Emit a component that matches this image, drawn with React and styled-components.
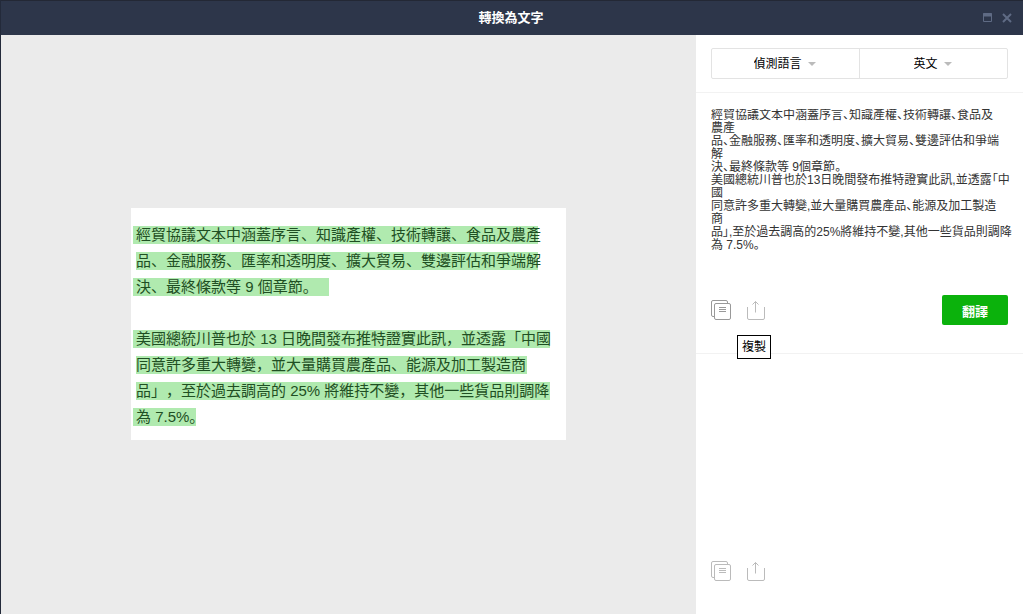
import React from 'react';
import styled, { createGlobalStyle } from 'styled-components';

const GlobalStyle = createGlobalStyle`
  * {
    box-sizing: border-box;
  }

  body {
    margin: 0;
    background: #fff;
    font-family: "Liberation Sans", "Noto Sans CJK JP", sans-serif;
    font-size: 12px;
    color: #000;
  }

  button, select, textarea {
    font: inherit;
    color: inherit;
  }
`;

const Window = styled.div`
  display: flex;
  flex-direction: column;
  min-height: 100vh;
  border-left: 1px solid #232a3a;
`;

const TitleBar = styled.header`
  display: grid;
  grid-template-columns: 1fr auto 1fr;
  align-items: center;
  height: 35px;
  padding: 0 11px 0 9px;
  background: #2d364a;
  border-top: 1px solid #232835;
`;

const Title = styled.h1`
  grid-column: 2;
  margin: 0;
  font-size: 13px;
  line-height: 20px;
  color: #fff;
`;

const WindowButtons = styled.div`
  display: flex;
  justify-content: flex-end;
  gap: 9px;
`;

const IconButton = styled.button`
  display: flex;
  padding: 0;
  border: 0;
  background: none;
  color: ${props => props.$color};
  cursor: pointer;
`;

const Body = styled.div`
  flex: 1;
  display: flex;
`;

const ImageArea = styled.main`
  flex: 1;
  display: flex;
  align-items: center;
  justify-content: center;
  padding-bottom: 2px;
  background: #ebebeb;
`;

const Scan = styled.div`
  width: 435px;
  padding: 14px 2px 10px;
  background: #fff;
  color: #1f4f23;
  font-size: 15px;
  text-spacing-trim: space-all;
`;

const ScanLine = styled.div`
  display: flex;
  align-items: center;
  height: 26px;
  padding-left: ${props => (props.$indent ? 3 : 0)}px;
`;

const Highlight = styled.span`
  height: 18px;
  padding-left: ${props => (props.$indent ? 0 : 3)}px;
  background: #b0eaaf;
  line-height: 18px;
  white-space: nowrap;
`;

const Panel = styled.aside`
  display: flex;
  flex-direction: column;
  width: 327px;
  background: #fff;
`;

const LanguageBar = styled.div`
  padding: 13px 15px;
  border-bottom: 1px solid #f2f2f2;
`;

const LanguageGroup = styled.div`
  display: flex;
  border: 1px solid #e3e3e3;
  border-radius: 2px;
`;

const LanguageField = styled.label`
  flex: 1;
  display: flex;
  align-items: center;
  justify-content: center;
  gap: 5px;
  height: 29px;
  padding-right: 2px;

  &:first-child {
    border-right: 1px solid #e3e3e3;
  }
`;

const LanguageSelect = styled.select`
  appearance: none;
  padding: 0;
  border: 0;
  outline: 0;
  background: none;
  cursor: pointer;
`;

const Source = styled.section`
  display: flex;
  flex-direction: column;
  gap: 4px;
  padding: 16px 15px 28px;
  border-bottom: 1px solid #f2f2f2;
`;

const TextBox = styled.textarea`
  flex: ${props => (props.$fill ? 1 : 'none')};
  width: calc(100% + 10px);
  padding: 0;
  border: 0;
  outline: 0;
  resize: none;
  overflow: hidden;
  background: none;
  color: #333;
  line-height: 13px;
  white-space: pre;
  font-feature-settings: "palt";
`;

const Result = styled.section`
  flex: 1;
  display: flex;
  flex-direction: column;
  padding: 16px 15px 33px;
`;

const Actions = styled.div`
  display: flex;
  align-items: center;
  gap: 16px;
`;

const CopyWrap = styled.div`
  position: relative;
`;

const Tooltip = styled.span`
  position: absolute;
  top: 35px;
  left: 26px;
  padding: 1px 4px;
  border: 1px solid #000;
  background: #fff;
  line-height: 20px;
  white-space: nowrap;
`;

const TranslateButton = styled.button`
  width: 66px;
  height: 30px;
  margin-left: auto;
  padding: 0;
  border: 0;
  border-radius: 2px;
  background: #0bb20c;
  color: #fff;
  font-size: 13px;
  font-weight: bold;
  cursor: pointer;
`;

const scanLines = [
  { text: '經貿協議文本中涵蓋序言、知識產權、技術轉讓、食品及農產', width: 405 },
  { text: '品、金融服務、匯率和透明度、擴大貿易、雙邊評估和爭端解', width: 402, indent: true },
  { text: '決、最終條款等 9 個章節。', width: 196 },
  { text: '' },
  { text: '美國總統川普也於 13 日晚間發布推特證實此訊，並透露「中國', width: 417 },
  { text: '同意許多重大轉變，並大量購買農產品、能源及加工製造商', width: 391, indent: true },
  { text: '品」，至於過去調高的 25% 將維持不變，其他一些貨品則調降', width: 414, indent: true },
  { text: '為 7.5%。', width: 63 },
];

const recognized = [
  '經貿協議文本中涵蓋序言、知識產權、技術轉讓、食品及',
  '農產',
  '品、金融服務、匯率和透明度、擴大貿易、雙邊評估和爭端',
  '解',
  '決、最終條款等 9個章節。',
  '美國總統川普也於13日晚間發布推特證實此訊,並透露「中',
  '國',
  '同意許多重大轉變,並大量購買農產品、能源及加工製造',
  '商',
  '品」,至於過去調高的25%將維持不變,其他一些貨品則調降',
  '為 7.5%。',
].join('\n');

function Caret() {
  return (
    <svg width="8" height="4" viewBox="0 0 8 4" aria-hidden="true">
      <path d="M0 0h8L4 4z" fill="#bbb" />
    </svg>
  );
}

function CopyIcon() {
  return (
    <svg width="20" height="20" viewBox="0 0 20 20" fill="none" stroke="currentColor">
      <path d="M3.5 16.5H2A1.5 1.5 0 0 1 .5 15V2A1.5 1.5 0 0 1 2 .5h13A1.5 1.5 0 0 1 16.5 2v1.5" />
      <rect x="3.5" y="3.5" width="16" height="16" rx="1.5" />
      <path d="M8 7.5h7M8 9.5h7M8 11.5h7" />
    </svg>
  );
}

function ShareIcon() {
  return (
    <svg width="18" height="20" viewBox="0 0 18 20" fill="none" stroke="currentColor">
      <path d="M.5 7v11A1.5 1.5 0 0 0 2 19.5h14a1.5 1.5 0 0 0 1.5-1.5V7" />
      <path d="M8.5 12.5v-11M5.5 4.5l3-3 3 3" />
    </svg>
  );
}

function App() {
  return (
    <>
      <GlobalStyle />
      <Window>
        <TitleBar>
          <Title>轉換為文字</Title>
          <WindowButtons>
            <IconButton $color="#5f6b84" aria-label="最大化">
              <svg width="10" height="10" viewBox="0 0 10 10" fill="none" stroke="currentColor">
                <path d="M.5.5h8v8h-8z" />
                <path d="M0 2h9" strokeWidth="3" />
              </svg>
            </IconButton>
            <IconButton $color="#5f6b84" aria-label="關閉">
              <svg width="10" height="10" viewBox="0 0 10 10" fill="none" stroke="currentColor" strokeWidth="2">
                <path d="M1 1l8 8M9 1L1 9" />
              </svg>
            </IconButton>
          </WindowButtons>
        </TitleBar>
        <Body>
          <ImageArea>
            <Scan>
              {scanLines.map((line, index) => (
                <ScanLine key={index} $indent={line.indent}>
                  {line.text && (
                    <Highlight $indent={line.indent} style={{ width: line.width }}>
                      {line.text}
                    </Highlight>
                  )}
                </ScanLine>
              ))}
            </Scan>
          </ImageArea>
          <Panel>
            <LanguageBar>
              <LanguageGroup>
                <LanguageField>
                  <LanguageSelect aria-label="來源語言" defaultValue="auto">
                    <option value="auto">偵測語言</option>
                  </LanguageSelect>
                  <Caret />
                </LanguageField>
                <LanguageField>
                  <LanguageSelect aria-label="目標語言" defaultValue="en">
                    <option value="en">英文</option>
                  </LanguageSelect>
                  <Caret />
                </LanguageField>
              </LanguageGroup>
            </LanguageBar>
            <Source>
              <TextBox aria-label="辨識文字" rows={14} defaultValue={recognized} />
              <Actions>
                <CopyWrap>
                  <IconButton $color="#999" aria-label="複製">
                    <CopyIcon />
                  </IconButton>
                  <Tooltip role="tooltip">複製</Tooltip>
                </CopyWrap>
                <IconButton $color="#bbb" aria-label="分享">
                  <ShareIcon />
                </IconButton>
                <TranslateButton>翻譯</TranslateButton>
              </Actions>
            </Source>
            <Result>
              <TextBox $fill aria-label="翻譯結果" readOnly />
              <Actions>
                <IconButton $color="#bbb" aria-label="複製">
                  <CopyIcon />
                </IconButton>
                <IconButton $color="#bbb" aria-label="分享">
                  <ShareIcon />
                </IconButton>
              </Actions>
            </Result>
          </Panel>
        </Body>
      </Window>
    </>
  );
}

export default App;
